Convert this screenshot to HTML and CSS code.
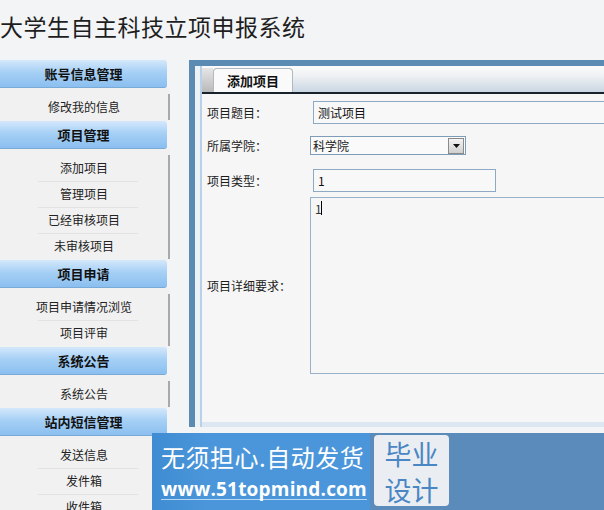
FILE: index.html
```html
<!DOCTYPE html>
<html lang="zh-CN">
<head>
  <meta charset="UTF-8">
  <title>大学生自主科技立项申报系统</title>
  <link rel="stylesheet" href="styles.css">
</head>
<body>

<h1 class="site-title">大学生自主科技立项申报系统</h1>

<div class="layout">
  <!-- 左侧菜单 -->
  <div class="sidebar">
    <div class="menu-head">账号信息管理</div>
    <div class="menu-body">
      <div class="menu-item">修改我的信息</div>
    </div>

    <div class="menu-head">项目管理</div>
    <div class="menu-body">
      <div class="menu-item">添加项目</div>
      <div class="menu-item">管理项目</div>
      <div class="menu-item">已经审核项目</div>
      <div class="menu-item">未审核项目</div>
    </div>

    <div class="menu-head">项目申请</div>
    <div class="menu-body">
      <div class="menu-item">项目申请情况浏览</div>
      <div class="menu-item">项目评审</div>
    </div>

    <div class="menu-head">系统公告</div>
    <div class="menu-body">
      <div class="menu-item">系统公告</div>
    </div>

    <div class="menu-head">站内短信管理</div>
    <div class="menu-body">
      <div class="menu-item">发送信息</div>
      <div class="menu-item">发件箱</div>
      <div class="menu-item">收件箱</div>
    </div>
  </div>

  <!-- 主面板 -->
  <div class="main">
    <div class="main-inner">
      <div class="tabs">
        <div class="tab-side"></div>
        <div class="tab active">添加项目</div>
      </div>

      <div class="form">
        <div class="row">
          <label class="label">项目题目：</label>
          <input class="text wide" type="text" value="测试项目">
        </div>
        <div class="row row-select">
          <label class="label">所属学院：</label>
          <div class="select">
            <span class="select-text">科学院</span>
            <span class="select-btn">
              <svg width="7" height="4" viewBox="0 0 7 4"><path d="M0 0h7L3.5 4z" fill="#111"/></svg>
            </span>
          </div>
        </div>
        <div class="row row-type">
          <label class="label">项目类型：</label>
          <input class="text short" type="text" value="1">
        </div>
        <div class="row row-area">
          <label class="label">项目详细要求：</label>
          <div class="area-wrap">
            <textarea class="area">1</textarea>
            <span class="caret"></span>
          </div>
        </div>
      </div>
      <div class="form-foot"></div>
    </div>
  </div>
</div>

<!-- 右下角广告 -->
<div class="ad">
  <div class="ad-left">
    <div class="ad-slogan">无须担心.自动发货</div>
    <div class="ad-url">www.51topmind.com</div>
  </div>
  <div class="ad-box">毕业<br>设计</div>
</div>

</body>
</html>
```

FILE: styles.css
```css
body {
  margin: 0;
  background: #f3f4f6;
  font-family: "Noto Sans CJK SC", sans-serif;
  font-size: 12px;
  color: #222;
  overflow: hidden;
  height: 510px;
  position: relative;
}

.site-title {
  margin: 0;
  height: 60px;
  padding-top: 10px;
  box-sizing: border-box;
  font-size: 23px;
  letter-spacing: 0.5px;
  font-weight: normal;
  line-height: 32px;
  color: #1e1e1e;
  white-space: nowrap;
}

.layout {
  display: flex;
  align-items: flex-start;
}

/* ---- sidebar ---- */
.sidebar {
  width: 170px;
  flex-shrink: 0;
}

.menu-head {
  width: 167px;
  height: 28px;
  line-height: 28px;
  text-align: center;
  font-weight: bold;
  font-size: 13px;
  color: #111;
  background: linear-gradient(#d4e8fb, #a6d0f5 45%, #8bbff0);
  border-bottom: 1px solid #7aaad6;
  border-radius: 0 3px 3px 0;
  box-sizing: border-box;
}

.menu-body {
  padding: 6px 0 1px;
  background: #f1f1f1;
}

.menu-item {
  height: 26px;
  line-height: 26px;
  text-align: center;
  font-size: 12px;
  color: #222;
  border-right: 2px solid #a9a9a9;
  position: relative;
}

.menu-item + .menu-item::before {
  content: "";
  position: absolute;
  top: 0;
  left: 38px;
  right: 30px;
  border-top: 1px solid #e2e2e2;
}

/* ---- main panel ---- */
.main {
  margin-left: 19px;
  width: 460px;
  flex-shrink: 0;
  border-left: 6px solid #5b8ab3;
  border-top: 6px solid #5b8ab3;
  background: #edf2f7;
  padding-left: 5px;
}

.main-inner {
  border-left: 2px solid #b8d0e8;
  background: #f6f6f6;
}

.tabs {
  display: flex;
  align-items: flex-end;
  height: 26px;
  background: linear-gradient(#fbfbfb, #eef0f3 40%, #c9d6e3);
  border-bottom: 2px solid #18222c;
}

.tab-side {
  width: 11px;
  height: 24px;
  background: linear-gradient(#e6e6e6, #b9b9b9);
}

.tab {
  width: 80px;
  height: 24px;
  line-height: 24px;
  text-align: center;
  font-weight: bold;
  font-size: 13px;
  color: #111;
  background: #fafafa;
  border: 1px solid #b0b8c2;
  border-bottom: none;
  border-radius: 4px 4px 0 0;
  box-sizing: border-box;
}

.form {
  padding: 7px 0 0 5px;
}

.row {
  display: flex;
  align-items: center;
  margin-bottom: 12px;
}

.row-select {
  margin-bottom: 14px;
}

.row-type {
  margin-bottom: 5px;
}

.row-area {
  margin-bottom: 0;
}

.label {
  width: 103px;
  flex-shrink: 0;
  font-size: 12px;
  color: #1c1c1c;
}

.text {
  height: 23px;
  box-sizing: border-box;
  margin-left: 3px;
  border: 1px solid #8ea9c3;
  background: #f8f8f8;
  padding: 0 4px;
  font-family: "Noto Sans CJK SC", sans-serif;
  font-size: 12px;
  color: #111;
}

.wide {
  width: 400px;
}

.short {
  width: 183px;
}

.select {
  display: flex;
  align-items: center;
  width: 156px;
  height: 19px;
  box-sizing: border-box;
  border: 1px solid #7f9db9;
  background: #fafafa;
}

.select-text {
  flex: 1;
  padding-left: 2px;
  font-size: 12px;
  line-height: 17px;
}

.select-btn {
  width: 16px;
  height: 16px;
  margin-right: 1px;
  box-sizing: border-box;
  border: 1px solid #8a8a8a;
  background: linear-gradient(#f4f4f4, #cfcfcf);
  display: flex;
  align-items: center;
  justify-content: center;
}

.area-wrap {
  position: relative;
}

.area {
  display: block;
  width: 400px;
  height: 177px;
  box-sizing: border-box;
  border: 1px solid #98b0c8;
  background: #f6f6f6;
  padding: 2px 4px;
  resize: none;
  font-family: "Noto Sans CJK SC", sans-serif;
  font-size: 12px;
  color: #333;
}

.caret {
  position: absolute;
  left: 11px;
  top: 4px;
  width: 1px;
  height: 14px;
  background: #000;
}

.form-foot {
  height: 48px;
  border-bottom: 5px solid #dde7f1;
}

/* ---- ad banner ---- */
.ad {
  position: absolute;
  left: 152px;
  top: 433px;
  right: 0;
  bottom: 0;
  display: flex;
  background: #5a8bba;
}

.ad-left {
  width: 218px;
  background: linear-gradient(90deg, #3f8cd2, #4b96da 25%, #4b96da);
  color: #fff;
  padding-left: 9px;
  box-sizing: border-box;
}

.ad-slogan {
  margin-top: 10px;
  font-size: 24px;
  letter-spacing: 0.5px;
  line-height: 28px;
  white-space: nowrap;
}

.ad-url {
  display: inline-block;
  margin-top: 8px;
  font-family: "Open Sans", "DejaVu Sans", sans-serif;
  font-weight: bold;
  font-size: 19px;
  letter-spacing: 0.2px;
  line-height: 20px;
  border-bottom: 1px solid #b9d8f2;
  white-space: nowrap;
}

.ad-box {
  width: 75px;
  margin: 2px 0 4px 4px;
  border-radius: 4px;
  background: #eaeef2;
  color: #4a86c4;
  font-size: 27px;
  line-height: 36px;
  text-align: center;
  padding-top: 1px;
  box-sizing: border-box;
}
```
